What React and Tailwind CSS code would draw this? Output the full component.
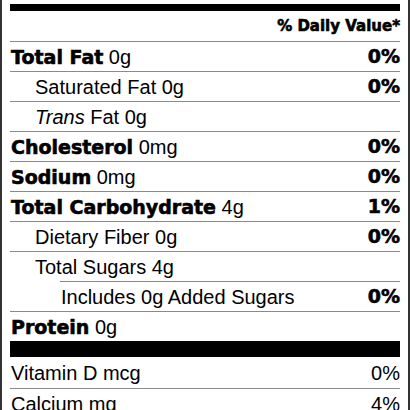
import React from "react";

const rows = [
  { label: "Total Fat", amount: "0g", dv: "0%", bold: true, indent: 0 },
  { label: "Saturated Fat", amount: "0g", dv: "0%", indent: 1 },
  { label: "Trans", italic: true, rest: " Fat 0g", indent: 1 },
  { label: "Cholesterol", amount: "0mg", dv: "0%", bold: true, indent: 0 },
  { label: "Sodium", amount: "0mg", dv: "0%", bold: true, indent: 0 },
  { label: "Total Carbohydrate", amount: "4g", dv: "1%", bold: true, indent: 0 },
  { label: "Dietary Fiber", amount: "0g", dv: "0%", indent: 1 },
  { label: "Total Sugars", amount: "4g", indent: 1 },
  { label: "Includes 0g Added Sugars", dv: "0%", indent: 2, lineIndent: true },
  { label: "Protein", amount: "0g", bold: true, indent: 0 },
];

// heavy label face, thickened a bit to read like a black weight
const heavy = "font-['DejaVu_Sans',sans-serif] font-bold [-webkit-text-stroke:0.6px_black]";

const Row = ({ row }) => {
  const pad = row.indent === 1 ? "pl-[25px]" : "pl-px";
  return (
    <div className={row.lineIndent ? "pl-[50px]" : ""}>
      <div className="h-[30px] border-t border-[#8a8a8a] flex items-center justify-between">
        <div className={`${row.lineIndent ? "pl-px" : pad} text-[20px] leading-none`}>
          {row.bold ? (
            <>
              <span className={`${heavy} text-[19px]`}>{row.label}</span> {row.amount}
            </>
          ) : row.italic ? (
            <>
              <i>{row.label}</i>
              {row.rest}
            </>
          ) : (
            <>
              {row.label}
              {row.amount ? ` ${row.amount}` : ""}
            </>
          )}
        </div>
        {row.dv && <span className={`${heavy} text-[19px] leading-none`}>{row.dv}</span>}
      </div>
    </div>
  );
};

export default function App() {
  return (
    <div className="w-[410px] h-[410px] overflow-hidden bg-white text-black font-['Liberation_Sans',Arial,sans-serif]">
      <div className="border-x-2 border-[#333] px-2 pt-1">
        <div className="h-[7px] bg-black" />
        <div className="h-[30px] flex items-center justify-end">
          <span className={`${heavy} text-[15px] leading-none`}>% Daily Value*</span>
        </div>
        {rows.map((row, i) => (
          <Row key={i} row={row} />
        ))}
        <div className="h-[16px] bg-black" />
        <div className="h-[31px] flex items-center justify-between text-[20px] leading-none">
          <span className="pl-px">Vitamin D mcg</span>
          <span>0%</span>
        </div>
        <div className="h-[30px] border-t border-[#8a8a8a] flex items-center justify-between text-[20px] leading-none">
          <span className="pl-px">Calcium mg</span>
          <span>4%</span>
        </div>
      </div>
    </div>
  );
}
